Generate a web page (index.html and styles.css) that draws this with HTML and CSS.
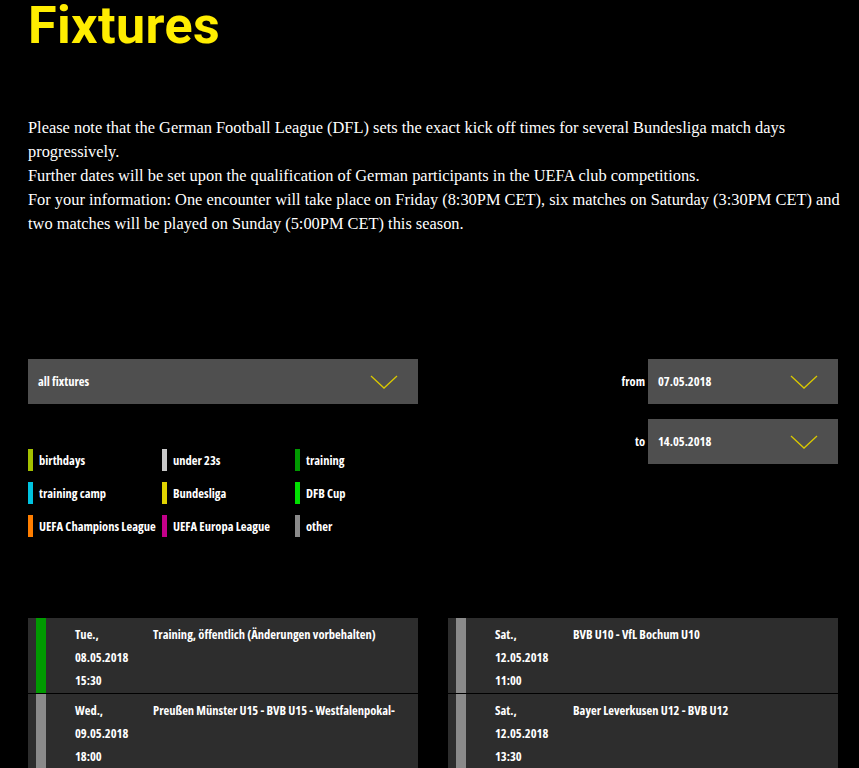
FILE: index.html
```html
<!DOCTYPE html>
<html lang="en">
<head>
<meta charset="utf-8">
<title>Fixtures</title>
<link rel="stylesheet" href="styles.css">
</head>
<body>
<main class="page">
  <h1 class="title">Fixtures</h1>
  <div class="intro">
    <p>Please note that the German Football League (DFL) sets the exact kick off times for several Bundesliga match days progressively.<br>
    Further dates will be set upon the qualification of German participants in the UEFA club competitions.<br>
    For your information: One encounter will take place on Friday (8:30PM CET), six matches on Saturday (3:30PM CET) and two matches will be played on Sunday (5:00PM CET) this season.</p>
  </div>

  <section class="filters">
    <div class="filter-left">
      <div class="select select-wide">
        <span class="select-text">all fixtures</span>
        <svg class="chev" width="28" height="14" viewBox="0 0 28 14"><polyline points="1,1 14,13 27,1" fill="none" stroke="#d9c800" stroke-width="1.3"/></svg>
      </div>
      <ul class="legend">
        <li><span class="sw" style="background:#a3c000"></span>birthdays</li>
        <li><span class="sw" style="background:#c8c8c8"></span>under 23s</li>
        <li><span class="sw" style="background:#009a00"></span>training</li>
        <li><span class="sw" style="background:#00c3e0"></span>training camp</li>
        <li><span class="sw" style="background:#e0d200"></span>Bundesliga</li>
        <li><span class="sw" style="background:#00e000"></span>DFB Cup</li>
        <li><span class="sw" style="background:#ff7e00"></span>UEFA Champions League</li>
        <li><span class="sw" style="background:#c4008a"></span>UEFA Europa League</li>
        <li><span class="sw" style="background:#8a8a8a"></span>other</li>
      </ul>
    </div>
    <div class="filter-right">
      <div class="date-row">
        <span class="date-label">from</span>
        <div class="select select-date">
          <span class="select-text">07.05.2018</span>
          <svg class="chev" width="28" height="14" viewBox="0 0 28 14"><polyline points="1,1 14,13 27,1" fill="none" stroke="#d9c800" stroke-width="1.3"/></svg>
        </div>
      </div>
      <div class="date-row">
        <span class="date-label">to</span>
        <div class="select select-date">
          <span class="select-text">14.05.2018</span>
          <svg class="chev" width="28" height="14" viewBox="0 0 28 14"><polyline points="1,1 14,13 27,1" fill="none" stroke="#d9c800" stroke-width="1.3"/></svg>
        </div>
      </div>
    </div>
  </section>

  <section class="fixtures">
    <div class="col">
      <div class="fixture">
        <span class="bar" style="background:#009a00"></span>
        <div class="when">Tue.,<br>08.05.2018<br>15:30</div>
        <div class="what">Training, öffentlich (Änderungen vorbehalten)</div>
      </div>
      <div class="fixture">
        <span class="bar" style="background:#8a8a8a"></span>
        <div class="when">Wed.,<br>09.05.2018<br>18:00</div>
        <div class="what">Preußen Münster U15 - BVB U15 - Westfalenpokal-</div>
      </div>
    </div>
    <div class="col">
      <div class="fixture">
        <span class="bar" style="background:#8a8a8a"></span>
        <div class="when">Sat.,<br>12.05.2018<br>11:00</div>
        <div class="what">BVB U10 - VfL Bochum U10</div>
      </div>
      <div class="fixture">
        <span class="bar" style="background:#8a8a8a"></span>
        <div class="when">Sat.,<br>12.05.2018<br>13:30</div>
        <div class="what">Bayer Leverkusen U12 - BVB U12</div>
      </div>
    </div>
  </section>
</main>
</body>
</html>
```
FILE: styles.css
```css
html, body {
  margin: 0;
  padding: 0;
  background: #000;
  color: #fff;
}
.page {
  padding: 0 6px 0 28px;
}
.title {
  margin: 0;
  font-family: "Roboto", "DejaVu Sans", sans-serif;
  font-weight: 700;
  font-size: 52px;
  line-height: 52px;
  letter-spacing: 0.4px;
  color: #ffed00;
}
.intro {
  padding-top: 64px;
}
.intro p {
  margin: 0;
  font-family: "Liberation Serif", serif;
  font-size: 16.4px;
  line-height: 24px;
  color: #fff;
}
.filters, .fixtures {
  width: 810px;
  font-family: "Open Sans", "DejaVu Sans", sans-serif;
  font-stretch: 75%;
  font-weight: 700;
  font-size: 12.5px;
}
.filters {
  margin-top: 123px;
  display: flex;
  justify-content: space-between;
}
.select {
  background: #4f4f4f;
  height: 45px;
  display: flex;
  align-items: center;
  justify-content: space-between;
  box-sizing: border-box;
  padding: 0 20px 0 10px;
  color: #fff;
}
.select-wide { width: 390px; }
.select-date { width: 190px; }
.chev { display: block; margin-top: 1px; }
.legend {
  list-style: none;
  margin: 45px 0 0;
  padding: 0;
  display: grid;
  grid-template-columns: 134px 133px 120px;
  row-gap: 11px;
}
.legend li {
  display: flex;
  align-items: center;
  gap: 6px;
  height: 22px;
  white-space: nowrap;
}
.sw {
  width: 5px;
  height: 22px;
  flex: none;
}
.filter-right {
  display: flex;
  flex-direction: column;
  gap: 15px;
}
.date-row {
  display: flex;
  align-items: center;
  justify-content: flex-end;
  gap: 3px;
}
.fixtures {
  margin-top: 81px;
  display: flex;
  justify-content: space-between;
}
.col {
  width: 390px;
  display: flex;
  flex-direction: column;
  gap: 1px;
}
.fixture {
  background: #2d2d2d;
  height: 75px;
  display: flex;
  padding-left: 8px;
  overflow: hidden;
}
.bar {
  width: 10px;
  flex: none;
}
.when {
  width: 78px;
  padding-left: 29px;
  padding-top: 5px;
  line-height: 23px;
  flex: none;
}
.what {
  padding-top: 5px;
  line-height: 23px;
}
```
